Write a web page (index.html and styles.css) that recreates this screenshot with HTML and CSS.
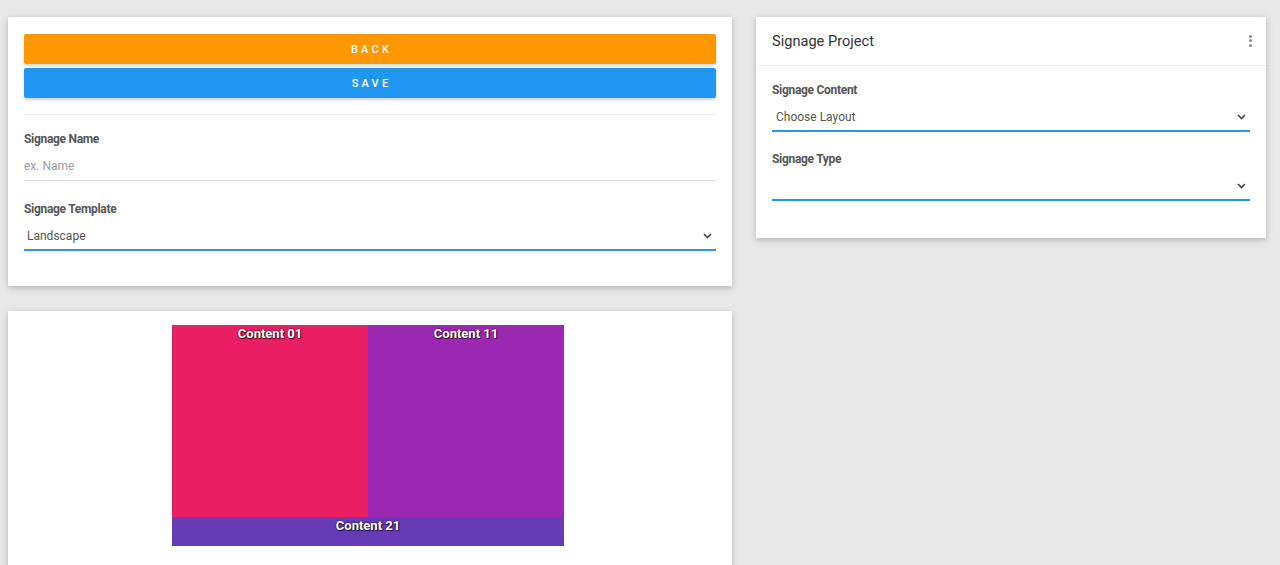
FILE: index.html
```html
<!DOCTYPE html>
<html>
<head>
<meta charset="utf-8">
<link rel="stylesheet" href="styles.css">
</head>
<body>
<div class="page">
  <div class="col-left">
    <div class="card form-card">
      <button class="btn btn-back">BACK</button>
      <button class="btn btn-save">SAVE</button>
      <div class="divider"></div>
      <div class="group">
        <label class="label">Signage Name</label>
        <div class="field field-plain"><span class="placeholder">ex. Name</span></div>
      </div>
      <div class="group">
        <label class="label">Signage Template</label>
        <div class="field field-select">
          <span class="value value-indent">Landscape</span>
          <svg class="chev" width="9" height="6" viewBox="0 0 9 6"><polyline points="1,1 4.5,4.5 8,1" fill="none" stroke="#444" stroke-width="1.6"/></svg>
        </div>
      </div>
    </div>
    <div class="card preview-card">
      <div class="layout">
        <div class="top-row">
          <div class="zone zone-pink">Content 01</div>
          <div class="zone zone-purple">Content 11</div>
        </div>
        <div class="zone zone-deep">Content 21</div>
      </div>
    </div>
  </div>
  <div class="col-right">
    <div class="card project-card">
      <div class="card-header">
        <span class="title">Signage Project</span>
        <span class="kebab"><i></i><i></i><i></i></span>
      </div>
      <div class="card-body">
        <div class="group">
          <label class="label">Signage Content</label>
          <div class="field field-select">
            <span class="value value-indent2">Choose Layout</span>
            <svg class="chev" width="9" height="6" viewBox="0 0 9 6"><polyline points="1,1 4.5,4.5 8,1" fill="none" stroke="#444" stroke-width="1.6"/></svg>
          </div>
        </div>
        <div class="group">
          <label class="label">Signage Type</label>
          <div class="field field-select">
            <span class="value"></span>
            <svg class="chev" width="9" height="6" viewBox="0 0 9 6"><polyline points="1,1 4.5,4.5 8,1" fill="none" stroke="#444" stroke-width="1.6"/></svg>
          </div>
        </div>
      </div>
    </div>
  </div>
</div>
</body>
</html>
```

FILE: styles.css
```css
* { box-sizing: border-box; }
html, body { margin: 0; padding: 0; }
body {
  background: #e8e8e8;
  font-family: Roboto, "Liberation Sans", Arial, sans-serif;
  color: #555;
  overflow: hidden;
  height: 565px;
}
.page {
  display: grid;
  grid-template-columns: 724px 510px;
  column-gap: 24px;
  padding: 17px 14px 0 8px;
  align-items: start;
}
.col-left { display: flex; flex-direction: column; gap: 25px; }
.card {
  background: #fff;
  box-shadow: 0 2px 5px rgba(0,0,0,0.16), 0 2px 10px rgba(0,0,0,0.08);
}
.form-card { padding: 17px 16px 15px; }
.btn {
  display: block;
  width: 100%;
  height: 30px;
  border: 0;
  border-radius: 2px;
  color: #fff;
  font-family: Roboto, "Liberation Sans", Arial, sans-serif;
  font-size: 11px;
  font-weight: 500;
  letter-spacing: 3.2px;
  padding: 0 0 0 3px;
  box-shadow: 0 2px 3px rgba(0,0,0,0.18);
}
.btn-back { background: #ff9800; margin-bottom: 4px; }
.btn-save { background: #2196f3; }
.divider { height: 1px; background: #ececec; margin: 16px 0 16px; }
.group { margin-bottom: 20px; }
.card-body .group { margin-bottom: 19px; }
.label {
  display: block;
  font-size: 12px;
  font-weight: 700;
  letter-spacing: -0.3px;
  line-height: 17px;
  color: #555;
  margin-bottom: 4px;
}
.field {
  height: 29px;
  display: flex;
  align-items: center;
  justify-content: space-between;
  font-size: 12px;
}
.field-plain { border-bottom: 1px solid #e0e0e0; }
.field-select { border-bottom: 2px solid #2196f3; padding: 1px 4px 0 0; }
.placeholder { color: #a0a0a0; }
.value { color: #555; }
.value-indent { padding-left: 3px; }
.value-indent2 { padding-left: 4px; }
.chev { display: block; }
.card-header {
  height: 49px;
  border-bottom: 1px solid #ececec;
  display: flex;
  align-items: center;
  justify-content: space-between;
  padding: 0 14px 1px 16px;
}
.title { font-size: 14.6px; color: #333; }
.kebab { display: flex; flex-direction: column; gap: 1.5px; }
.kebab i { display: block; width: 3px; height: 3px; border-radius: 50%; background: #888; }
.card-body { padding: 16px 16px 18px; }
.preview-card { padding: 14px 0 30px; height: 260px; }
.layout {
  width: 392px;
  margin: 0 auto;
  position: relative;
  left: -2px;
  display: flex;
  flex-direction: column;
}
.top-row { display: flex; height: 192px; }
.zone {
  flex: 1;
  text-align: center;
  color: #fff;
  font-size: 13px;
  font-weight: 700;
  line-height: 16px;
  padding-top: 1px;
  text-shadow: 0 0 2px rgba(0,0,0,0.8), 1px 1px 1px rgba(0,0,0,0.6);
}
.zone-pink { background: #e91e63; }
.zone-purple { background: #9c27b0; }
.zone-deep { background: #673ab7; height: 29px; flex: none; }
```
